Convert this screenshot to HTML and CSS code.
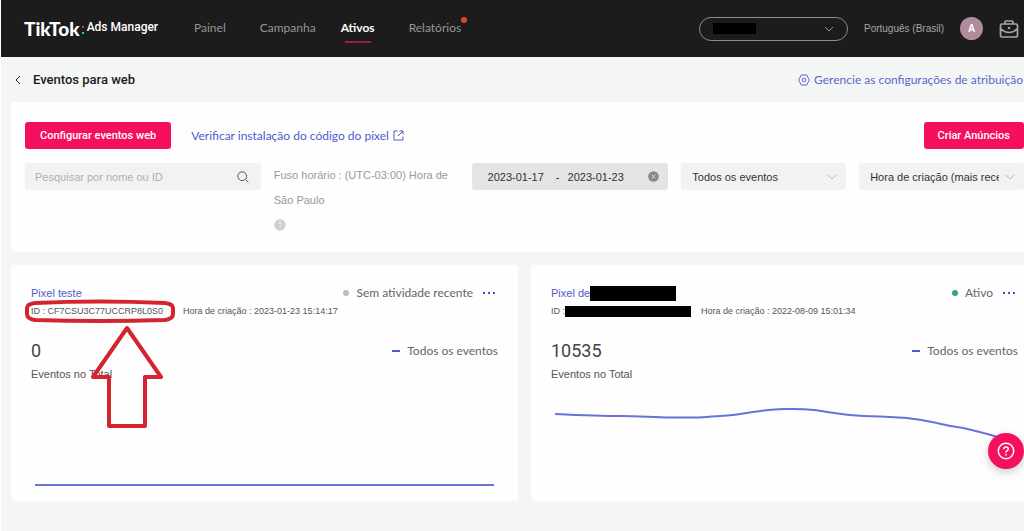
FILE: index.html
```html
<!DOCTYPE html>
<html lang="pt-BR">
<head>
<meta charset="utf-8">
<meta name="viewport" content="width=device-width, initial-scale=1">
<title>TikTok Ads Manager</title>
<link rel="stylesheet" href="styles.css">
</head>
<body>
<header class="topbar">
  <a class="brand" href="#"><span class="logo">TikTok</span><span class="colon"><i></i><i></i></span><span class="product">Ads Manager</span></a>
  <nav class="nav">
    <a href="#">Painel</a>
    <a href="#">Campanha</a>
    <a href="#" class="active" aria-current="page">Ativos</a>
    <a href="#" class="notified">Relatórios</a>
  </nav>
  <div class="tools">
    <button class="account" type="button" aria-label="Conta"><span class="mask mask-account"></span>
      <svg class="chevron" width="10" height="6" viewBox="0 0 10 6"><path d="M1 1l4 4 4-4"/></svg></button>
    <a class="language" href="#">Português (Brasil)</a>
    <span class="avatar">A</span>
    <button class="case" type="button" aria-label="Negócios">
      <svg width="20" height="20" viewBox="0 0 20 20"><path d="M3 5h14q1.500 0 1.500 1.500v10q0 1.500-1.500 1.500H3q-1.500 0-1.500-1.500v-10Q1.500 5 3 5zM6 5V3q0-1 1-1h6q1 0 1 1V5M2 10q3.500 3.500 8 3.500t8-3.500"/><circle class="dot" cx="10" cy="9" r="1.200"/></svg></button>
  </div>
</header>

<div class="heading">
  <button class="back" type="button" aria-label="Voltar"><svg width="6" height="10" viewBox="0 0 6 10"><path d="M5 1L1 5l4 4"/></svg></button>
  <h1>Eventos para web</h1>
  <a class="attribution" href="#"><svg width="12" height="12" viewBox="0 0 12 12"><path d="M3.300 1h5.400l2.700 5-2.700 5H3.300L.6 6z"/><circle cx="6" cy="6" r="1.800"/></svg>Gerencie as configurações de atribuição</a>
</div>

<main class="content">
  <section class="panel">
    <div class="actions">
      <button class="primary" type="button">Configurar eventos web</button>
      <a class="verify" href="#">Verificar instalação do código do pixel<svg width="11" height="11" viewBox="0 0 11 11"><path d="M4.500 1H1v9h9V6.500M6.500 1H10v3.500M10 1L5 6"/></svg></a>
      <button class="primary create" type="button">Criar Anúncios</button>
    </div>
    <div class="filters">
      <label class="field search"><input type="search" placeholder="Pesquisar por nome ou ID" aria-label="Pesquisar por nome ou ID">
        <svg width="12" height="12" viewBox="0 0 12 12"><circle cx="5.200" cy="5.200" r="4.400"/><path d="M8.500 8.500L11.300 11.300"/></svg></label>
      <p class="timezone">Fuso horário : (UTC-03:00) Hora de São Paulo <svg width="12" height="12" viewBox="0 0 12 12"><circle cx="6" cy="6" r="5.700"/><path d="M4.500 4.800q0-1.500 1.500-1.500t1.500 1.300q0 .8-.8 1.200T6 7M6 8v1"/></svg></p>
      <div class="field dates">
        <input type="text" value="2023-01-17" aria-label="Data inicial"><span>-</span><input type="text" value="2023-01-23" aria-label="Data final">
        <button class="clear" type="button" aria-label="Limpar"><svg width="11" height="11" viewBox="0 0 11 11"><circle cx="5.500" cy="5.500" r="5.300"/><path d="M3.700 3.700l3.600 3.600M7.300 3.700L3.700 7.300"/></svg></button>
      </div>
      <label class="field pick"><select aria-label="Eventos"><option>Todos os eventos</option></select>
        <svg class="chevron" width="10" height="6" viewBox="0 0 10 6"><path d="M1 1l4 4 4-4"/></svg></label>
      <label class="field pick"><select aria-label="Ordenar"><option>Hora de criação (mais recente)</option></select>
        <svg class="chevron" width="10" height="6" viewBox="0 0 10 6"><path d="M1 1l4 4 4-4"/></svg></label>
    </div>
  </section>

  <section class="cards">
    <article class="card">
      <div class="row">
        <h2><a href="#">Pixel teste</a></h2>
        <span class="status"><i class="idle"></i>Sem atividade recente</span>
        <button class="more" type="button" aria-label="Mais"><i></i><i></i><i></i></button>
      </div>
      <div class="meta"><span>ID : CF7CSU3C77UCCRP8L0S0</span><span>Hora de criação : 2023-01-23 15:14:17</span></div>
      <div class="row total"><strong>0</strong><span class="legend">Todos os eventos</span></div>
      <p class="caption">Eventos no Total</p>
      <svg class="chart" viewBox="0 0 467 115" preserveAspectRatio="none"><path d="M4 103H463"/></svg>
      <svg class="callout" width="152" height="132" viewBox="0 0 152 132"><path d="M11 4Q76 1 141 4Q149 5 149 9V15Q149 20 141 21Q76 23 11 21Q3 20 3 15V9Q3 5 11 4ZM103 29L137 78H121V127H85V78H69Z"/></svg>
    </article>
    <article class="card">
      <div class="row">
        <h2><a href="#">Pixel de</a><span class="mask mask-name"></span></h2>
        <span class="status"><i class="live"></i>Ativo</span>
        <button class="more" type="button" aria-label="Mais"><i></i><i></i><i></i></button>
      </div>
      <div class="meta meta-masked"><span>ID :<span class="mask mask-id"></span></span><span>Hora de criação : 2022-08-09 15:01:34</span></div>
      <div class="row total"><strong>10535</strong><span class="legend">Todos os eventos</span></div>
      <p class="caption">Eventos no Total</p>
      <svg class="chart" viewBox="0 0 467 115" preserveAspectRatio="none"><path d="M4 32C26 33 48 34 69 34S102 35.500 119 35.500S143 36 156 35S177 34 189 32S222 27 233 27S250 26.500 263 28S291 33 313 34S344 34.500 363 37S393 43 406 45S444 54 463 60"/></svg>
    </article>
  </section>
</main>
<button class="help" type="button" aria-label="Ajuda"><svg width="18" height="18" viewBox="0 0 18 18"><circle cx="9" cy="9" r="7.700"/><path d="M6.700 7.200Q6.700 5 9 5t2.300 2Q11.300 8 10 8.800T9 10.700M9 12v1.500"/></svg></button>
</body>
</html>
```
FILE: styles.css
```css
* { box-sizing: border-box; }
body {
  margin: 0;
  min-height: 100vh;
  overflow-x: hidden;
  position: relative;
  border-left: 1px solid #fff;
  background: #f4f5f5;
  color: #333;
  font: 11px/16px "Liberation Sans", Arial, sans-serif;
}
h1, h2, p { margin: 0; }
a { color: inherit; text-decoration: none; }
button, input, select { font: inherit; color: inherit; border: 0; padding: 0; background: none; }
svg { fill: none; stroke: currentColor; flex: none; }

.topbar {
  display: flex;
  align-items: center;
  height: 57px;
  padding: 0 5px 0 23px;
  background: #1c1c1c;
  color: #969696;
}
.brand { display: flex; align-items: center; color: #fff; width: 170px; }
.logo { font: 900 19px/20px Lato, sans-serif; }
.colon { display: grid; gap: 4px; margin: 2px 3px 0 2px; }
.colon i { width: 2px; height: 2px; background: #d63a5d; }
.colon i + i { background: #2bd0c8; }
.product { font: 500 12px/16px Roboto, sans-serif; margin-bottom: 3px; }
.nav { display: flex; gap: 34px; font: 12px/16px Lato, sans-serif; padding-bottom: 2px; }
.nav a { position: relative; }
.nav .active { color: #fff; font-weight: 700; margin-left: -9px; }
.nav .active::after {
  content: ""; position: absolute; left: 4px; right: 4px; bottom: -7px; height: 2px; background: #a31848;
}
.nav .notified::after {
  content: ""; position: absolute; right: -6px; top: -3px; width: 6px; height: 6px; border-radius: 50%; background: #e5481f;
}
.tools { display: flex; align-items: center; gap: 16px; margin-left: auto; font-size: 10px; }
.language { color: #a5a5a5; }
.account {
  display: flex; align-items: center; justify-content: space-between;
  width: 149px; height: 24px; padding: 0 13px; border: 1px solid #8c8c8c; border-radius: 12px;
}
.mask { display: inline-block; background: #000; }
.mask-account { width: 43px; height: 11px; }
.avatar {
  width: 23px; height: 23px; border-radius: 50%; background: #b08c9c; color: #fff;
  font-weight: 700; line-height: 23px; text-align: center;
}
.case { display: flex; color: #a5a5a5; }
.case path { stroke-width: 1.7; }
.case .dot { fill: currentColor; stroke: none; }

.heading { display: flex; align-items: center; height: 45px; padding: 0 1px 0 14px; color: #1c1c1c; }
.back { display: flex; margin-right: 12px; }
h1 { font: 500 13px/16px Roboto, sans-serif; }
.attribution {
  display: flex; align-items: center; gap: 4px; margin-left: auto; color: #5a66cf;
  font: 12px/16px Lato, sans-serif;
}

.content { margin: 0 -14px 0 10px; }
.panel { padding: 20px 14px 21px; background: #fefefe; border-radius: 4px; }
.actions { display: flex; align-items: center; }
.primary {
  height: 27px; padding: 0 15px; border-radius: 3px; background: #f50f5e; color: #fff;
  font: 500 11px/16px Roboto, sans-serif;
}
.create { margin-left: auto; padding: 0 14px; }
.verify {
  display: flex; align-items: center; gap: 4px; margin-left: 20px; color: #5159cc;
  font: 12px/16px Lato, sans-serif;
}
.filters { display: flex; align-items: flex-start; gap: 13px; margin-top: 14px; }
.field { display: flex; align-items: center; height: 27px; border-radius: 3px; background: #f2f2f2; }
.search { flex: 1 1 236px; min-width: 0; padding: 0 12px 0 10px; color: #555; }
.search input { flex: 1; min-width: 0; outline: 0; }
.search input::placeholder { color: #b0b0b0; }
.timezone { flex: 1 1 185px; color: #999; line-height: 25px; }
.timezone svg { display: block; margin-top: 6px; stroke: #f2f2f2; }
.timezone circle { fill: #cfcfcf; stroke: none; }
.dates { flex: 1 1 197px; min-width: 0; padding: 0 9px 0 16px; background: #e4e4e4; }
.dates input { width: 60px; }
.dates span { flex: 0 0 20px; text-align: center; }
.clear { display: flex; margin-left: auto; color: #e4e4e4; }
.clear circle { fill: #888; stroke: none; }
.pick { flex: 1 1 165px; min-width: 0; padding: 0 9px 0 11px; }
.pick select { flex: 1; min-width: 0; appearance: none; overflow: hidden; text-overflow: clip; }
.pick .chevron { margin-left: 6px; color: #bbb; }

.cards { display: grid; grid-template-columns: 1fr 1fr; gap: 13px; margin-top: 13px; }
.card { position: relative; min-width: 0; height: 236px; padding: 20px; background: #fefefe; border-radius: 4px; }
.row { display: flex; align-items: center; }
h2 { display: flex; align-items: center; height: 16px; font-size: 11px; font-weight: 400; color: #5159cc; }
.mask-name { width: 86px; height: 15px; }
.status, .legend {
  display: flex; align-items: center; gap: 7px; margin-left: auto; color: #666;
  font: 12px/16px Lato, sans-serif;
}
.status i { width: 6px; height: 6px; border-radius: 50%; }
.idle { background: #bbb; }
.live { background: #35a573; }
.more { display: flex; gap: 3px; padding: 0 3px 0 10px; }
.more i { width: 2px; height: 2px; background: #4552b8; }
.meta { display: flex; gap: 20px; margin-top: 2px; font-size: 9px; color: #555; }
.meta-masked { gap: 10px; }
.meta > span { display: flex; align-items: center; }
.mask-id { width: 126px; height: 11px; }
.total { margin-top: 20px; }
.total strong { font: 400 18px/24px Roboto, sans-serif; color: #444; }
.legend::before { content: ""; width: 8px; height: 2px; background: #4c5bd0; }
.caption { margin-top: 3px; color: #555; }
.chart { display: block; width: 100%; height: 115px; color: #6873d8; }
.chart path { stroke-width: 2; vector-effect: non-scaling-stroke; }
.callout { position: absolute; left: 13px; top: 34px; color: #d3242f; }
.callout path { stroke-width: 4; stroke-linejoin: round; }

.help {
  position: absolute; right: 0; top: 433px; display: grid; place-items: center;
  width: 36px; height: 36px; border-radius: 50%; background: #f50f5e; color: #fff;
  box-shadow: 0 3px 8px #0003;
}
.help svg { stroke-width: 1.5; }
```
